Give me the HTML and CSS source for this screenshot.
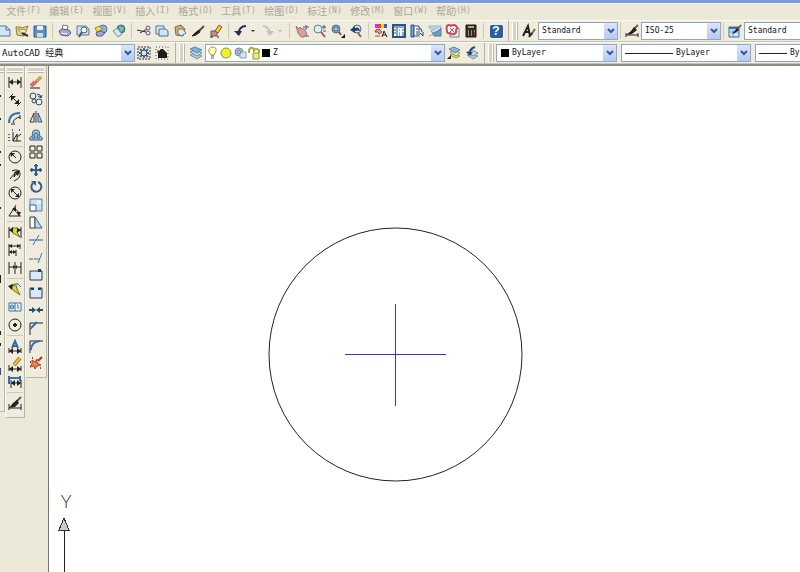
FILE: index.html
```html
<!DOCTYPE html>
<html lang="zh-CN">
<head>
<meta charset="utf-8">
<title>AutoCAD</title>
<link rel="stylesheet" href="styles.css">
</head>
<body>
<div class="titlebar"></div>
<nav class="menubar">
  <button>文件<span>(F)</span></button>
  <button>编辑<span>(E)</span></button>
  <button>视图<span>(V)</span></button>
  <button>插入<span>(I)</span></button>
  <button>格式<span>(O)</span></button>
  <button>工具<span>(T)</span></button>
  <button>绘图<span>(D)</span></button>
  <button>标注<span>(N)</span></button>
  <button>修改<span>(M)</span></button>
  <button>窗口<span>(W)</span></button>
  <button>帮助<span>(H)</span></button>
</nav>

<div class="row">
  <div class="bar bar-standard">
    <button class="tool" aria-label="新建"><svg><path d="M-1 2H9L13 6V12H-1Z" fill="#cfe4f5" stroke="#4c7898"/><path d="M9 2V6H13" stroke="#4c7898"/></svg></button>
    <button class="tool" aria-label="打开"><svg><path d="M1 3H5L7 4L13 2L9 12L2 11Z" fill="#e6d288" stroke="#8d7a35"/><path d="M3 5L12 6L8 11Z" fill="#f8edbb" stroke="#a6924e"/><path d="M7 9L13 12" stroke="#333" stroke-width="2"/></svg></button>
    <button class="tool" aria-label="保存"><svg><path d="M1 2H13V13H1Z" fill="#5b91c6" stroke="#2c5c91"/><path d="M4 2H10V6H4Z" fill="#e9f2fa" stroke="none"/><path d="M4 9H10V13H4Z" fill="#d3dce5" stroke="none"/></svg></button>
    <i class="sep"></i>
    <button class="tool" aria-label="打印"><svg><path d="M4 6L5 1L10 2L9 6" fill="#fff" stroke="#77758f"/><path d="M1 7L4 5L11 6L13 9L10 12L3 11Z" fill="#aaa6cf" stroke="#5d5886"/><path d="M3 9L9 10" stroke="#fff"/></svg></button>
    <button class="tool" aria-label="打印预览"><svg><path d="M1 2H10L13 5V11H1Z" fill="#cfe2f1" stroke="#537b9f"/><circle cx="8" cy="6" r="3" fill="#f2f9ff" stroke="#3e5f7e"/><path d="M6 8L3 13" stroke="#555" stroke-width="2"/></svg></button>
    <button class="tool" aria-label="发布"><svg><circle cx="9" cy="5" r="4" fill="#89b4d1" stroke="#4c7898"/><path d="M1 4L6 2L8 6L3 8Z" fill="#f4d862" stroke="#a58225"/><path d="M2 9L6 7L11 9L8 12L3 12Z" fill="#aaa6cf" stroke="#5d5886"/></svg></button>
    <button class="tool" aria-label="三维发布"><svg><circle cx="9" cy="5" r="4" fill="#4f93b7" stroke="#3a6f8a"/><path d="M7 2L12 4L9 8" fill="#8cc47e" stroke="none"/><path d="M1 7L5 4L10 10L6 13Z" fill="#d6e7ef" stroke="#6b8fa5"/></svg></button>
    <i class="sep"></i>
    <button class="tool" aria-label="剪切"><svg><path d="M0 6L9 8M3 9L10 5" stroke="#333"/><circle cx="11" cy="4" r="2" stroke="#5b5584"/><circle cx="11" cy="9" r="2" stroke="#5b5584"/></svg></button>
    <button class="tool" aria-label="复制"><svg><path d="M1 2H9V10H1Z" fill="#d9eaf7" stroke="#477394"/><path d="M4 5H11L13 7V12H4Z" fill="#cfe4f5" stroke="#477394"/></svg></button>
    <button class="tool" aria-label="粘贴"><svg><path d="M2 3L8 1L12 5L10 12L3 11Z" fill="#d8b06b" stroke="#886833"/><path d="M5 5L10 5L13 9L8 12L5 9Z" fill="#dceaf5" stroke="#5b7c98"/></svg></button>
    <button class="tool" aria-label="特性匹配"><svg><path d="M13 2L7 8" stroke="#6d4928" stroke-width="2"/><path d="M8 6L9 8L5 11L1 12L4 9Z" fill="#222" stroke="#222"/></svg></button>
    <button class="tool" aria-label="块编辑器"><svg><path d="M2 7H8V12H2Z" fill="#ec855b" stroke="#37619a"/><path d="M6 7L10 1L13 3L9 9Z" fill="#f7c640" stroke="#825d21"/><path d="M1 13H4M8 13H10" stroke="#222"/></svg></button>
    <i class="sep"></i>
    <button class="tool" aria-label="放弃"><svg><path d="M4 11Q5 2 12 2" stroke="#1f3263" stroke-width="2"/><path d="M0 7H8L5 12Z" fill="#1f3263" stroke="none"/></svg></button>
    <button class="drop" aria-label="放弃列表"><svg><path d="M1 6H5L3 8Z" fill="#1f3263" stroke="none"/></svg></button>
    <button class="tool" aria-label="重做"><svg><path d="M9 11Q9 3 2 2" stroke="#c3c3c0" stroke-width="2"/><path d="M5 7H13L9 12Z" fill="#c3c3c0" stroke="none"/></svg></button>
    <button class="drop" aria-label="重做列表"><svg><path d="M1 6H5L3 8Z" fill="#b5b4ab" stroke="none"/></svg></button>
    <i class="sep"></i>
    <button class="tool" aria-label="实时平移"><svg><path d="M1 2L4 5L5 3L7 5L9 5L12 10L9 13H6L3 9Z" fill="#d9a19a" stroke="#a5706c"/><path d="M11 1V6M8 3H14M10 12H14" stroke="#365d88"/></svg></button>
    <button class="tool" aria-label="实时缩放"><svg><circle cx="5" cy="5" r="4" fill="#dcebf4" stroke="#6b7f8e"/><path d="M8 8L12 13" stroke="#9a5b45" stroke-width="2"/><path d="M11 1V5M9 3H13M10 7H13" stroke="#365d88"/></svg></button>
    <button class="tool" aria-label="窗口缩放"><svg><circle cx="5" cy="5" r="4" fill="#bad1e3" stroke="#4d6880"/><path d="M3 3H7V7H3Z" stroke="#31598a"/><path d="M8 8L10 11" stroke="#6d625b" stroke-width="2"/><path d="M14 10V14H10Z" fill="#111" stroke="none"/></svg></button>
    <button class="tool" aria-label="缩放上一个"><svg><circle cx="8" cy="5" r="4" fill="#d6e6f2" stroke="#4d6880"/><path d="M9 9L12 13" stroke="#9a5b45" stroke-width="2"/><path d="M1 6L6 2V4Q10 2 11 7Q9 6 6 7V9Z" fill="#26406e" stroke="none"/></svg></button>
    <i class="sep"></i>
    <button class="tool" aria-label="特性"><svg><path d="M1 2H4" stroke="#e02be0" stroke-width="4"/><path d="M4 2H7" stroke="#e7442d" stroke-width="4"/><path d="M7 2H10" stroke="#e7d52d" stroke-width="4"/><path d="M10 2H13" stroke="#3a58cc" stroke-width="4"/><path d="M2 6L5 5L8 8L5 10L4 8L1 8Z" fill="#e0a184" stroke="#8e4a3c"/><path d="M8 13L10 7L13 13M9 11H12" stroke="#222"/><path d="M1 12H6" stroke="#b43a3a"/></svg></button>
    <button class="tool" aria-label="设计中心"><svg><path d="M1 1H13V13H1Z" fill="#f5fbff" stroke="#295682" stroke-width="2"/><path d="M1 3H13M5 3V13" stroke="#295682"/><path d="M2 6H4M2 9H4M7 6H8M10 6H12M7 9H8M10 9H12M7 11H8M10 11H12" stroke="#295682"/></svg></button>
    <button class="tool" aria-label="工具选项板"><svg><path d="M1 1H4V13H1Z" fill="#79a6cc" stroke="#295682"/><path d="M4 2H9V12H4Z" fill="#fff" stroke="#295682"/><path d="M6 5H8M6 8H8M6 10H8M9 4Q12 4 12 8M10 9L13 12V8" stroke="#2c4371"/></svg></button>
    <button class="tool" aria-label="图纸集"><svg><path d="M1 2H13V5L8 7L1 4Z" fill="#b7cfdf" stroke="#a8bfcc"/><path d="M3 7L9 8L13 4V12H6Z" fill="#6f9dbe" stroke="#547c9a"/><path d="M1 9L7 7L12 4" stroke="#e9eff2"/><path d="M1 12L6 10" stroke="#8ba9bb"/></svg></button>
    <button class="tool" aria-label="标记集"><svg><path d="M4 4H13V13H4Z" fill="#e9edf1" stroke="#7c7d8d"/><path d="M1 2Q3 0 5 2Q8 0 10 2Q12 4 10 6Q11 9 8 10Q6 11 4 9Q1 10 1 7Q0 4 1 2Z" fill="#fff" stroke="#d14658" stroke-width="2"/><path d="M4 4L8 8M8 4L4 8" stroke="#d14658"/></svg></button>
    <button class="tool" aria-label="计算器"><svg><path d="M2 1H12V13H2Z" fill="#3a2625" stroke="#241918"/><path d="M4 3H10" stroke="#8cba69" stroke-width="2"/><path d="M4 7H5M7 7H8M10 7H11M4 9H5M7 9H8M4 11H5M7 11H8" stroke="#eee"/><path d="M10 9H11M10 11H11" stroke="#e34c43"/></svg></button>
    <i class="sep"></i>
    <button class="tool help" aria-label="帮助"><b>?</b></button>
  </div>
  <div class="bar bar-styles">
    <i class="grip"></i>
    <button class="tool" aria-label="文字样式"><svg><path d="M1 12L6 2L8 12M3 8H8" stroke="#222" stroke-width="2"/><path d="M13 5L9 11" stroke="#8f6133" stroke-width="2"/><path d="M10 9L7 13" stroke="#222" stroke-width="2"/></svg></button>
    <label class="combo"><select aria-label="文字样式名"><option>Standard</option></select><span class="arrow"><svg><path d="M3 4L6 7L9 4"/></svg></span></label>
    <i class="sep"></i>
    <button class="tool" aria-label="标注样式"><svg><path d="M1 9V13M13 9V13M1 11H13" stroke="#222"/><path d="M13 1L9 5" stroke="#8a5935" stroke-width="2"/><path d="M9 3L12 6L7 10L1 11L6 7Z" fill="#222" stroke="none"/></svg></button>
    <label class="combo"><select aria-label="标注样式名"><option>ISO-25</option></select><span class="arrow"><svg><path d="M3 4L6 7L9 4"/></svg></span></label>
    <i class="sep"></i>
    <button class="tool" aria-label="表格样式"><svg><path d="M1 3H11V13H1Z" fill="#cfe5f8" stroke="#376fa5"/><path d="M1 4H11" stroke="#376fa5" stroke-width="2"/><path d="M1 8H11M5 4V13" stroke="#6ba1cf"/><path d="M13 1L9 6" stroke="#8a5935" stroke-width="2"/><path d="M9 4L11 6L7 9L4 10Z" fill="#222" stroke="none"/></svg></button>
    <label class="combo"><select aria-label="表格样式名"><option>Standard</option></select></label>
  </div>
</div>

<div class="row">
  <div class="bar bar-workspace">
    <label class="combo workspace"><select aria-label="工作空间"><option>AutoCAD 经典</option></select><span class="arrow"><svg><path d="M3 4L6 7L9 4"/></svg></span></label>
    <button class="tool" aria-label="工作空间设置"><svg><path d="M1 1H13V13H1Z" stroke="#333" stroke-dasharray="2 1"/><path d="M7 2V12M2 7H12M3 3L11 11M11 3L3 11" stroke="#44698b" stroke-width="2"/><circle cx="7" cy="7" r="3" fill="#d7e6f0" stroke="#263d58"/></svg></button>
    <button class="tool" aria-label="我的工作空间"><svg><path d="M1 1H13V13H1Z" stroke="#555" stroke-dasharray="1 2"/><path d="M3 6L6 3H8L12 7V12H3Z" fill="#1c1c1c" stroke="none"/><path d="M3 4V7" stroke="#1c1c1c"/></svg></button>
  </div>
  <div class="bar bar-layers">
    <i class="grip"></i>
    <button class="tool" aria-label="图层特性管理器"><svg><path d="M1 9L6 7L13 10L8 13Z" fill="#b9c8d1" stroke="#7e97a6"/><path d="M1 6L6 4L13 7L8 10Z" fill="#c9dbe6" stroke="#6d91a9"/><path d="M1 3L6 1L13 4L8 7Z" fill="#7fb1d5" stroke="#5989ad"/></svg></button>
    <label class="combo layers">
      <svg><path d="M5 9L3 6Q2 2 6 1Q11 1 10 5L8 9Z" fill="#ffffc4" stroke="#a49a37"/><path d="M5 10H8M5 12H8" stroke="#666"/></svg>
      <svg><circle cx="6" cy="7" r="5" fill="#f0ef32" stroke="#8b9b22"/></svg>
      <svg><circle cx="5" cy="6" r="4" fill="#b4cadb" stroke="#6a8ba4"/><path d="M6 6H12V12H6Z" fill="#d7e5ef" stroke="#8ca0b0"/><circle cx="5" cy="6" r="2" stroke="#6a8ba4"/></svg>
      <svg><path d="M1 7V4Q3 0 6 3V6" stroke="#a3b02c" stroke-width="2"/><path d="M6 6V4Q8 2 11 4V7" stroke="#a6b23e" stroke-width="2"/><path d="M5 7H11V13H5Z" fill="#eded77" stroke="#8d9c26"/></svg>
      <i class="swatch"></i>
      <select aria-label="图层"><option>Z</option></select><span class="arrow"><svg><path d="M3 4L6 7L9 4"/></svg></span>
    </label>
    <button class="tool" aria-label="将对象的图层置为当前"><svg><path d="M3 9L7 7L13 10L9 12Z" fill="#e4dc52" stroke="#a39b2d"/><path d="M3 6L7 4L13 7L9 10Z" fill="#e5e6c8" stroke="#8f9a73"/><path d="M2 3L7 1L13 4L8 7Z" fill="#8bb7d3" stroke="#5b879f"/><path d="M0 13L4 9V13Z" fill="#222" stroke="none"/></svg></button>
    <button class="tool" aria-label="上一个图层"><svg><path d="M2 9L7 7L13 10L8 13Z" fill="#b9c8d1" stroke="#7e97a6"/><path d="M2 6L7 4L13 7L8 10Z" fill="#c9dbe6" stroke="#6d91a9"/><path d="M5 8Q4 3 10 1" stroke="#24477f" stroke-width="2"/><path d="M1 6H8L5 10Z" fill="#24477f" stroke="none"/></svg></button>
  </div>
  <div class="bar bar-properties">
    <i class="grip"></i>
    <label class="combo color"><i class="swatch"></i><select aria-label="颜色"><option>ByLayer</option></select><span class="arrow"><svg><path d="M3 4L6 7L9 4"/></svg></span></label>
    <label class="combo linetype"><i class="line"></i><select aria-label="线型"><option>ByLayer</option></select><span class="arrow"><svg><path d="M3 4L6 7L9 4"/></svg></span></label>
    <label class="combo weight"><i class="line"></i><select aria-label="线宽"><option>ByLayer</option></select></label>
  </div>
</div>

<main class="work">
  <aside class="palette palette-draw">
    <i class="vgrip"></i>
    <svg><path d="M0 22V24M0 45V47M0 78V80M0 91V93M0 134V136M0 202V210M0 258V262M0 270V273" stroke="#222" stroke-width="2"/><path d="M0 295V302" stroke="#334a9c" stroke-width="2"/></svg>
  </aside>
  <aside class="palette palette-dim">
    <i class="vgrip"></i>
    <button class="tool" aria-label="线性标注"><svg><path d="M1 2V13M13 2V13M1 7H13"/><path d="M1 7L5 4V10ZM13 7L9 4V10Z" fill="#222"/></svg></button>
    <button class="tool" aria-label="对齐标注"><svg><path d="M1 5L5 1M9 13L13 9M3 3L11 11"/><path d="M3 3H8L3 8ZM11 11H6L11 6Z" fill="#222"/></svg></button>
    <button class="tool" aria-label="弧长标注"><svg><path d="M1 12Q1 2 12 2" stroke="#3571ac" stroke-width="2"/><path d="M5 12Q6 7 12 6M3 13H7M12 4V8"/></svg></button>
    <button class="tool" aria-label="坐标标注"><svg><path d="M5 3V12H13M5 12L9 5V12M9 8L13 5"/><path d="M1 5V6M1 8V9M1 11V12M4 1H5M11 1H12" stroke="#3571ac" stroke-width="2"/></svg></button>
    <i class="hsep"></i>
    <button class="tool" aria-label="半径标注"><svg><circle cx="7" cy="7" r="6"/><path d="M8 8L3 3"/><path d="M2 3H7L3 7Z" fill="#222"/></svg></button>
    <button class="tool" aria-label="折弯标注"><svg><path d="M4 3Q10 0 12 5Q13 10 6 13M2 11L7 5L6 9L10 4"/><path d="M6 4L12 2L10 8Z" fill="#222"/></svg></button>
    <button class="tool" aria-label="直径标注"><svg><circle cx="7" cy="7" r="6"/><path d="M3 3L11 11"/><path d="M3 3H7L3 7ZM11 11H7L11 7Z" fill="#222"/></svg></button>
    <button class="tool" aria-label="角度标注"><svg><path d="M8 1L1 12H13M5 5Q11 5 11 12"/><path d="M4 5L8 3V8ZM11 12L8 8H13Z" fill="#222"/></svg></button>
    <i class="hsep"></i>
    <button class="tool" aria-label="快速标注"><svg><path d="M1 2V13M13 2V13M1 5H13"/><path d="M4 3L10 3L9 7L12 12L5 8Z" fill="#e3d822" stroke="#68751e"/><path d="M1 5L5 2V8ZM13 5L9 3V8Z" fill="#222"/></svg></button>
    <button class="tool" aria-label="基线标注"><svg><path d="M1 1V13M12 1V6M8 7V13M1 3H12M1 9H8"/><path d="M1 3L4 1V5ZM1 9L4 7V11ZM12 3L9 1V5ZM8 9L5 7V11Z" fill="#222"/></svg></button>
    <button class="tool" aria-label="连续标注"><svg><path d="M1 1V13M7 1V13M13 1V13M1 6H13"/><path d="M7 6L5 4V8ZM7 6L9 4V8Z" fill="#222"/></svg></button>
    <i class="hsep"></i>
    <button class="tool" aria-label="快速引线"><svg><path d="M1 5L6 2H10M9 1L13 5" stroke="#3571ac"/><path d="M2 4L8 3L9 7L12 13L5 8Z" fill="#e3d822" stroke="#68751e"/><path d="M0 4L5 2L4 8Z" fill="#222"/></svg></button>
    <button class="tool" aria-label="公差"><svg><path d="M1 3H13V11H1ZM7 3V11" stroke="#3571ac" fill="#f3f8fc"/><circle cx="4" cy="7" r="2" stroke="#3571ac"/><path d="M2 7H6M10 5V9M9 5H10" stroke="#3571ac"/></svg></button>
    <button class="tool" aria-label="圆心标记"><svg><circle cx="7" cy="7" r="6"/><path d="M7 5V9M5 7H9" stroke-width="2"/></svg></button>
    <i class="hsep"></i>
    <button class="tool" aria-label="编辑标注"><svg><path d="M4 9L7 2L10 9M5 7H9" stroke="#2f69a3" stroke-width="2"/><path d="M1 9V14M13 9V14M1 12H13"/><path d="M1 12L5 9V15ZM13 12L9 9V15Z" fill="#222"/></svg></button>
    <button class="tool" aria-label="编辑标注文字"><svg><path d="M12 1L6 8" stroke="#9f6d20" stroke-width="4"/><path d="M12 1L6 8" stroke="#e9c34d" stroke-width="2"/><path d="M1 8V14M13 9V14M1 12H13"/><path d="M1 12L5 9V15ZM13 12L9 9V15Z" fill="#222"/></svg></button>
    <button class="tool" aria-label="标注更新"><svg><path d="M1 1V9M12 1V6M1 3H12" stroke="#3571ac" stroke-width="2"/><path d="M3 5V13M13 5V13M3 8H13"/><path d="M3 8L7 5V11ZM13 8L9 5V11Z" fill="#222"/></svg></button>
    <i class="hsep"></i>
    <button class="tool" aria-label="标注样式"><svg><path d="M1 8V14M13 8V14M1 12H13"/><path d="M13 1L8 6" stroke="#555" stroke-width="2"/><path d="M9 4L11 7L7 11L1 12L5 7Z" fill="#222" stroke="none"/></svg></button>
  </aside>
  <aside class="palette palette-modify">
    <i class="vgrip"></i>
    <div class="stack">
      <button class="tool" aria-label="删除"><svg><path d="M1 13H11"/><path d="M12 2L5 9" stroke="#b98732" stroke-width="3"/><path d="M13 1L8 6" stroke="#e8ca6f"/><path d="M6 7L2 11" stroke="#d66a76" stroke-width="4"/></svg></button>
      <button class="tool" aria-label="复制"><svg><g stroke="#2b4868"><circle cx="4" cy="4" r="3"/><circle cx="10" cy="10" r="3"/><circle cx="5" cy="9" r="2"/><path d="M8 2Q12 2 12 6M9 4L12 6L13 3"/></g></svg></button>
      <button class="tool" aria-label="镜像"><svg><path d="M5 3V12H1Z" stroke="#333"/><path d="M9 3V12H13Z" fill="#a9c8e0" stroke="#315f8a"/><path d="M7 1V13" stroke="#335"/></svg></button>
      <button class="tool" aria-label="偏移"><svg><path d="M1 12Q0 8 4 8Q2 2 7 2Q12 2 10 8Q14 8 13 12Z" fill="#9dc3df" stroke="#315f8a"/><path d="M3 10H6Q4 5 7 5Q10 5 8 10H11" stroke="#315f8a"/></svg></button>
      <button class="tool" aria-label="阵列"><svg><path d="M1 1H6V6H1ZM8 1H13V6H8ZM1 8H6V13H1ZM8 8H13V13H8Z"/></svg></button>
      <button class="tool" aria-label="移动"><svg><g stroke="#315f8f"><path d="M7 2V12M2 7H12" stroke-width="2"/><path d="M7 1L5 3H9ZM7 13L5 11H9ZM1 7L3 5V9ZM13 7L11 5V9Z" fill="#315f8f"/></g></svg></button>
      <button class="tool" aria-label="旋转"><svg><path d="M4 3A5 5 0 1 0 9 2" stroke="#315f8f" stroke-width="2"/><path d="M2 1H7V6Z" fill="#315f8f" stroke="none"/></svg></button>
      <button class="tool" aria-label="缩放"><svg><path d="M1 1H13V13H1Z" fill="#c8e0f4" stroke="#587ea3"/><path d="M1 7H7V13H1Z" fill="#fff" stroke="#39648f"/><path d="M7 7L11 3M8 3H11V6" stroke="#fff"/></svg></button>
      <button class="tool" aria-label="拉伸"><svg><path d="M1 2H6V13H1Z" fill="#fff" stroke="#333"/><path d="M6 2L13 13H6Z" fill="#b8d6ee" stroke="#39648f"/></svg></button>
      <button class="tool" aria-label="修剪"><svg><path d="M0 7H5M9 7H14" stroke="#555"/><path d="M10 2L4 12M4 7H10" stroke="#357bb4"/></svg></button>
      <button class="tool" aria-label="延伸"><svg><path d="M0 8H4M5 8H7" stroke="#555"/><path d="M13 2L9 12M7 8H11" stroke="#357bb4"/></svg></button>
      <button class="tool" aria-label="打断于点"><svg><path d="M1 3H13V12H1Z" fill="#dbeaf5" stroke="#273d55"/><path d="M9 1H12V4H9Z" fill="#173b65" stroke="none"/></svg></button>
      <button class="tool" aria-label="打断"><svg><path d="M5 2H1V12H13V2H9" fill="#dbeaf5" stroke="#273d55"/><path d="M2 3H5M9 3H12" stroke="#173b65" stroke-width="2"/></svg></button>
      <button class="tool" aria-label="合并"><svg><path d="M0 7H6M8 7H14" stroke="#234d78" stroke-width="2"/><path d="M3 4L7 7L3 10ZM11 4L7 7L11 10Z" fill="#234d78" stroke="none"/></svg></button>
      <button class="tool" aria-label="倒角"><svg><path d="M1 14V2H14"/><path d="M1 8L8 1" stroke="#3571ac" stroke-width="2"/></svg></button>
      <button class="tool" aria-label="圆角"><svg><path d="M1 14V2H14"/><path d="M2 11Q2 3 11 2" stroke="#3571ac" stroke-width="2"/></svg></button>
      <button class="tool" aria-label="分解"><svg><path d="M3 4L6 6L8 3L8 7L12 9L8 10L6 13L5 10L1 11L3 8Z" fill="#ec8743" stroke="#ae3e2d"/><path d="M9 5L13 1M3 2H4M1 6H2M11 12H12" stroke="#a6392f" stroke-width="2"/></svg></button>
    </div>
  </aside>
  <div class="canvas">
    <svg role="img" aria-label="绘图区">
      <circle class="smooth" cx="346.5" cy="288.5" r="126.5" stroke="#222"/>
      <rect x="296" y="288" width="101" height="1" fill="#3333d6" stroke="none"/>
      <rect x="346" y="238" width="1" height="102" fill="#3333d6" stroke="none"/>
      <path d="M15 464V2000" stroke="#222"/>
      <path d="M15 452L20 464H10Z" fill="#ccc" stroke="#333"/>
      <text x="17" y="442" text-anchor="middle">Y</text>
    </svg>
  </div>
</main>
</body>
</html>
```
FILE: styles.css
```css
* { box-sizing: border-box; }

body {
  margin: 0;
  height: 100vh;
  display: flex;
  flex-direction: column;
  overflow: hidden;
  background: #ece9d8;
  color: #111;
  font: 8px/12px "DejaVu Sans Mono", "Noto Sans CJK SC", monospace;
}

button {
  margin: 0;
  padding: 0;
  border: 0;
  background: none;
  color: inherit;
  font: inherit;
}

svg {
  display: block;
  flex: none;
  width: 14px;
  height: 14px;
  fill: none;
  stroke: #222;
  overflow: visible;
}

.titlebar {
  flex: none;
  height: 3px;
  background: #7a9de2;
}

.menubar {
  flex: none;
  display: flex;
  height: 17px;
  padding-left: 2px;
  padding-bottom: 2px;
  border-top: 1px solid #f6f4ea;
  color: #aaa798;
}

.menubar button {
  display: flex;
  align-items: center;
  justify-content: center;
  width: 43px;
  font-family: "Noto Sans CJK SC", sans-serif;
  font-size: 10px;
  white-space: nowrap;
}

.menubar span {
  font-family: "DejaVu Sans Mono", monospace;
  font-size: 8px;
}

.row {
  flex: none;
  display: flex;
  height: 22px;
}

.bar {
  flex: none;
  display: flex;
  align-items: center;
  border-top: 1px solid #fbfaf3;
  border-right: 1px solid #b5b2a3;
  border-bottom: 1px solid #c6c3b3;
  background: #efecde;
}

.bar-standard {
  width: 514px;
  margin-left: -5px;
}

.bar-styles,
.bar-properties {
  flex: 1;
  min-width: 0;
  overflow: hidden;
  border-right: 0;
}

.bar-workspace {
  width: 178px;
  margin-left: -2px;
}

.bar-layers { width: 309px; }

.tool {
  flex: none;
  display: flex;
  align-items: center;
  justify-content: center;
  width: 18px;
  height: 18px;
}

.tool:hover { background: #dfe6f5; }

.drop { width: 9px; }

.drop svg { width: 7px; }

.help b {
  width: 13px;
  height: 13px;
  border-radius: 2px;
  background: #27609a;
  color: #fff;
  font: bold 12px/13px "Liberation Sans", sans-serif;
}

.sep {
  flex: none;
  width: 7px;
  height: 16px;
  padding: 0 3px;
  background: #cdcabb content-box;
}

.bar-styles .sep {
  width: 5px;
  padding: 0 2px;
}

.grip {
  flex: none;
  width: 5px;
  height: 18px;
  margin: 0 3px;
  border: solid #fff;
  border-width: 0 1px;
  background: #d6d3c4;
  box-shadow: 1px 0 #bbb8a8;
}

.combo {
  flex: none;
  display: flex;
  align-items: center;
  width: 80px;
  height: 18px;
  border: 1px solid #91a8c4;
  background: #fff;
}

.combo select {
  flex: 1;
  min-width: 0;
  height: 14px;
  margin: 0;
  padding: 0 0 0 3px;
  border: 0;
  outline: 0;
  appearance: none;
  background: none;
  color: #111;
  font: inherit;
}

.arrow {
  flex: none;
  display: flex;
  align-items: center;
  justify-content: center;
  width: 13px;
  height: 16px;
  border-radius: 1px;
  background: linear-gradient(#dae5fd, #b5c9f6);
  pointer-events: none;
}

.arrow svg {
  width: 12px;
  height: 12px;
  stroke: #3d5789;
  stroke-width: 2;
}

.workspace {
  width: 137px;
  font-size: 9px;
}

.layers { width: 240px; }

.swatch {
  flex: none;
  width: 8px;
  height: 8px;
  background: #000;
}

.color {
  width: 121px;
  padding-left: 4px;
}

.linetype,
.weight {
  width: 130px;
  margin-left: 4px;
  padding-left: 3px;
}

.line {
  flex: none;
  width: 48px;
  height: 1px;
  background: #222;
}

.weight .line { width: 28px; }

.work {
  flex: 1;
  min-height: 0;
  display: flex;
  align-items: flex-start;
  border-top: 2px solid #8f8e86;
}

.palette {
  flex: none;
  display: flex;
  flex-direction: column;
  align-items: center;
  padding-bottom: 5px;
  border: solid #b9b6a6;
  border-width: 0 1px 1px 0;
  background: #efecde;
}

.palette path[fill="#222"] { stroke: none; }

.palette-draw {
  width: 5px;
  overflow: hidden;
  padding-bottom: 0;
}

.palette-draw svg {
  width: 5px;
  height: 338px;
}

.palette-dim {
  width: 20px;
  border-left: 1px solid #fff;
}

.palette-modify {
  width: 22px;
  border-left: 1px solid #fff;
}

.vgrip {
  flex: none;
  width: 16px;
  height: 5px;
  margin: 1px 0;
  border: solid #fff;
  border-width: 1px 0;
  background: #d6d3c4;
  box-shadow: 0 1px #bbb8a8;
}

.hsep {
  flex: none;
  width: 16px;
  height: 3px;
  padding: 1px 0;
  background: #cdcabb content-box;
}

.stack {
  display: grid;
  grid-auto-rows: 1fr;
  height: 299px;
}

.stack .tool { height: auto; }

.canvas {
  flex: 1;
  align-self: stretch;
  min-width: 0;
  overflow: hidden;
  margin-left: 1px;
  border-left: 1px solid #77776f;
  background: #fff;
}

.canvas svg {
  width: 100%;
  height: 100%;
  shape-rendering: crispEdges;
}

.canvas .smooth { shape-rendering: auto; }

.canvas text {
  fill: #333;
  stroke: none;
  font: 300 18px Lato, sans-serif;
}
```
